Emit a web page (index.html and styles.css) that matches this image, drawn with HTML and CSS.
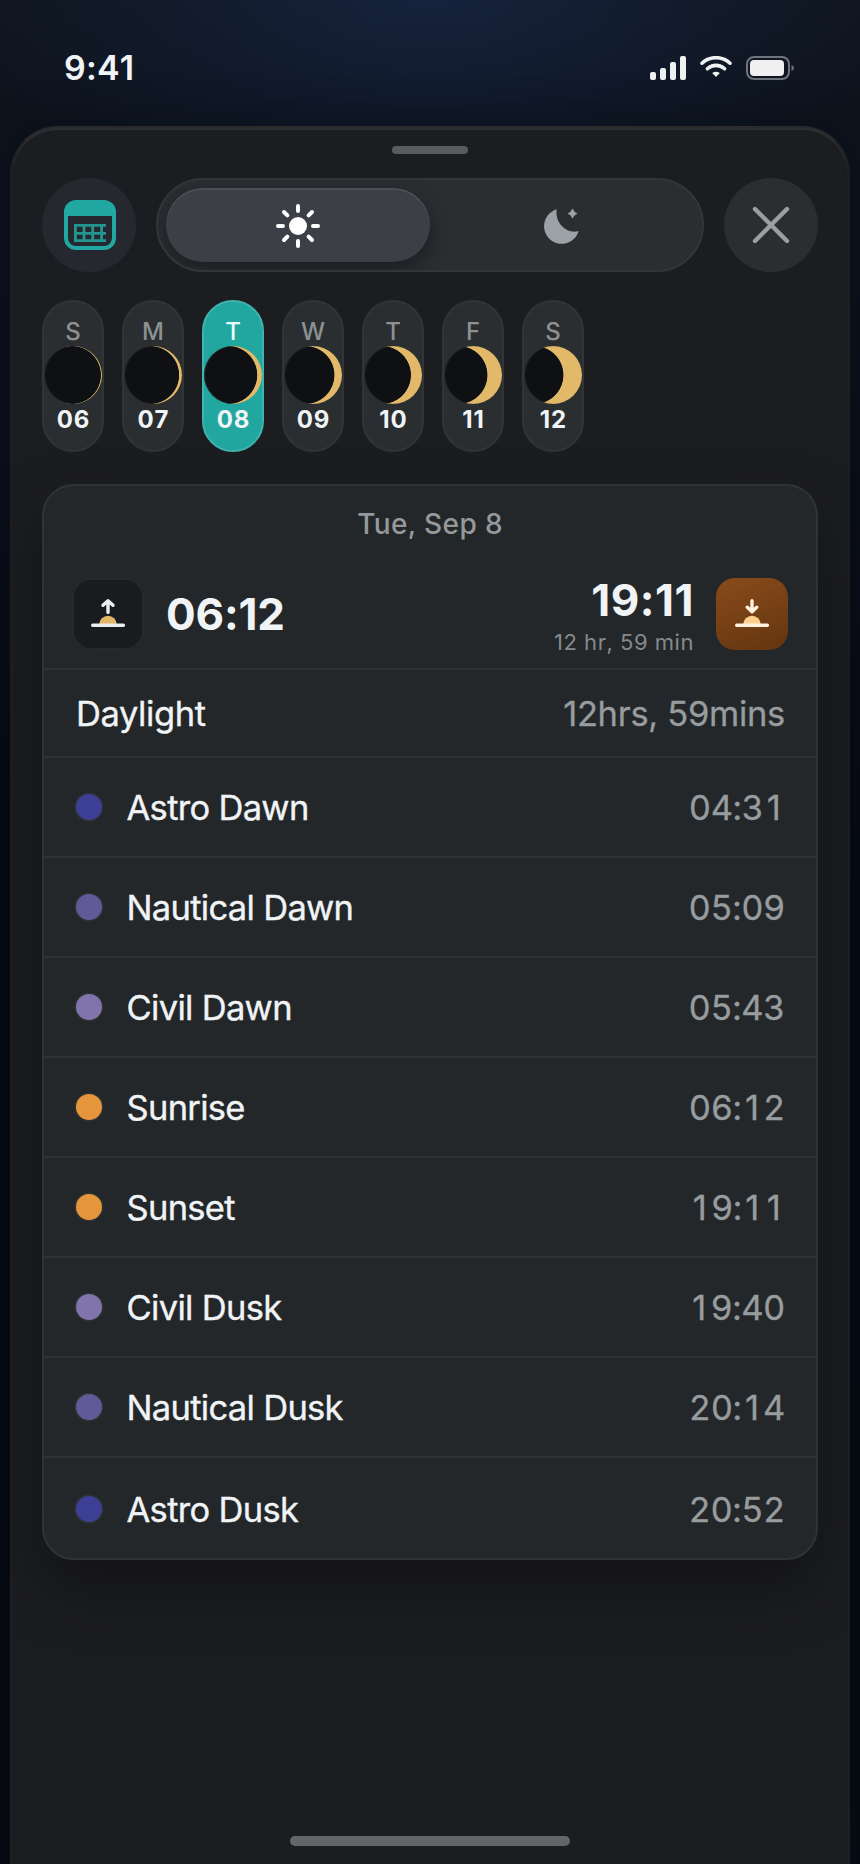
FILE: index.html
```html
<!DOCTYPE html>
<html lang="en">
<head>
<meta charset="utf-8">
<title>Sun times</title>
<link rel="stylesheet" href="styles.css">
</head>
<body>
<div class="screen">
  <header class="status">
    <span class="clock">9:41</span>
    <span class="status-icons">
      <svg width="36" height="24" viewBox="0 0 36 24" fill="#eef0f2"><rect y="16" width="6" height="8" rx="2"/><rect x="10" y="12" width="6" height="12" rx="2"/><rect x="20" y="6" width="6" height="18" rx="2"/><rect x="30" width="6" height="24" rx="2"/></svg>
      <svg class="wifi" width="32" height="24" viewBox="0 0 32 24" fill="none" stroke="#eef0f2" stroke-width="3.6" stroke-linecap="round"><path d="M2 7.2a20.5 20.5 0 0 1 28 0"/><path d="M7.4 12.8a12.6 12.6 0 0 1 17.2 0"/><path d="M12.2 17q3.8-2.6 7.6 0L16 21z" fill="#eef0f2" stroke="none"/></svg>
      <svg width="50" height="24" viewBox="0 0 50 24"><rect x="1" y="1" width="42" height="22" rx="7" fill="none" stroke="#fff" stroke-opacity=".4" stroke-width="2"/><rect x="4" y="4" width="34" height="16" rx="4" fill="#f0f0f1"/><path d="M45.5 9q2.5 1 2.5 3t-2.5 3z" fill="#fff" fill-opacity=".4"/></svg>
    </span>
  </header>

  <main class="sheet">
    <div class="grabber"></div>

    <div class="controls">
      <button class="round calendar" aria-label="Calendar">
        <svg width="52" height="50" viewBox="0 0 52 50"><path fill="#21a8a2" fill-rule="evenodd" d="M12 0h28a12 12 0 0 1 12 12v26a12 12 0 0 1-12 12H12A12 12 0 0 1 0 38V12A12 12 0 0 1 12 0zM4 16v22a8 8 0 0 0 8 8h28a8 8 0 0 0 8-8V16z"/><path fill="none" stroke="#22968f" stroke-width="2.8" d="M11.4 24v18M20 24v18M28.7 24v18M37.6 24v18M10 25.4h32M10 33.4h32M10 40.7h32"/></svg>
      </button>
      <div class="segment">
        <div class="option active">
          <svg width="48" height="48" viewBox="0 0 48 48" fill="#fff" stroke="#fff" stroke-width="4" stroke-linecap="round"><circle cx="24" cy="25" r="9" stroke="none"/><path d="M24 5v5M24 40v5M4 25h5M39 25h5M10 11l3.4 3.4M34.6 35.6L38 39M10 39l3.4-3.4M34.6 14.4L38 11"/></svg>
        </div>
        <div class="option">
          <svg width="48" height="48" viewBox="0 0 48 48" fill="#9ba1a5"><path d="M18.7 8.3A17.6 17.6 0 1 0 40.6 30C30 33.4 16.5 23 18.7 8.300z"/><path d="M34.500 7.500q1.400 3.600 5 5q-3.600 1.400-5 5q-1.400-3.600-5-5q3.600-1.400 5-5z"/></svg>
        </div>
      </div>
      <button class="round" aria-label="Close">
        <svg width="40" height="40" viewBox="0 0 40 40" stroke="#9b9fa2" stroke-width="4.400" stroke-linecap="round"><path d="M4 4l32 32M36 4L4 36"/></svg>
      </button>
    </div>

    <div class="week">
      <div class="day"><span class="dow">S</span><i class="moon p1"></i><span class="num">06</span></div>
      <div class="day"><span class="dow">M</span><i class="moon p2"></i><span class="num">07</span></div>
      <div class="day selected"><span class="dow">T</span><i class="moon p3"></i><span class="num">08</span></div>
      <div class="day"><span class="dow">W</span><i class="moon p4"></i><span class="num">09</span></div>
      <div class="day"><span class="dow">T</span><i class="moon p5"></i><span class="num">10</span></div>
      <div class="day"><span class="dow">F</span><i class="moon p6"></i><span class="num">11</span></div>
      <div class="day"><span class="dow">S</span><i class="moon p7"></i><span class="num">12</span></div>
    </div>

    <section class="card">
      <div class="summary">
        <div class="date">Tue, Sep 8</div>
        <div class="sun-row">
          <div class="tile rise">
            <svg width="36" height="36" viewBox="0 0 36 36" fill="none" stroke="#eceded" stroke-width="3.400" stroke-linecap="round" stroke-linejoin="round"><path d="M9.300 28.500a8.700 8.700 0 0 1 17.400 0z" fill="#e5b567" stroke="none"/><path d="M2.700 29.300h30.700M18 5v11.400M13 9.300l5-4.600 5 4.600"/></svg>
          </div>
          <div class="time">06:12</div>
          <div class="set-time">
            <div class="time">19:11</div>
            <div class="length">12 hr, 59 min</div>
          </div>
          <div class="tile set">
            <svg width="36" height="36" viewBox="0 0 36 36" fill="none" stroke="#fff1df" stroke-width="3.400" stroke-linecap="round" stroke-linejoin="round"><path d="M9.300 28.500a8.700 8.700 0 0 1 17.400 0z" fill="#ffd08c" stroke="none"/><path d="M2.700 29.300h30.700M18 4.700v10.500M13.300 11.300l4.700 4.500 4.700-4.500"/></svg>
          </div>
        </div>
      </div>
      <div class="row daylight"><span class="name">Daylight</span><span class="value">12hrs, 59mins</span></div>
      <div class="row"><i class="dot astro"></i><span class="name">Astro Dawn</span><span class="value clocked">04:3<b>1</b></span></div>
      <div class="row"><i class="dot nautical"></i><span class="name">Nautical Dawn</span><span class="value clocked">05:09</span></div>
      <div class="row"><i class="dot civil"></i><span class="name">Civil Dawn</span><span class="value clocked">05:43</span></div>
      <div class="row"><i class="dot sun"></i><span class="name">Sunrise</span><span class="value clocked">06:<b>1</b>2</span></div>
      <div class="row"><i class="dot sun"></i><span class="name">Sunset</span><span class="value clocked"><b>1</b>9:<b>1</b><b>1</b></span></div>
      <div class="row"><i class="dot civil"></i><span class="name">Civil Dusk</span><span class="value clocked"><b>1</b>9:40</span></div>
      <div class="row"><i class="dot nautical"></i><span class="name">Nautical Dusk</span><span class="value clocked">20:<b>1</b>4</span></div>
      <div class="row last"><i class="dot astro"></i><span class="name">Astro Dusk</span><span class="value clocked">20:52</span></div>
    </section>

    <div class="home"></div>
  </main>
</div>
</body>
</html>
```
FILE: styles.css
```css
* { box-sizing: border-box; }

body {
  margin: 0;
  background: #070b14;
  font-family: Inter, sans-serif;
  color: #f1f4f6;
}

.screen {
  width: 860px;
  height: 1864px;
  display: flex;
  flex-direction: column;
  overflow: hidden;
  background:
    radial-gradient(ellipse 480px 230px at 50% -10px, rgba(26, 42, 78, .65), rgba(20, 36, 64, .35) 55%, transparent),
    linear-gradient(#10161f, #0d131d 120px, #0b101c 400px, #070b14 900px, #070b13);
}

.status {
  flex: none;
  height: 126px;
  padding: 48px 64px 0;
  display: flex;
  align-items: flex-start;
  justify-content: space-between;
}
.clock {
  font-size: 34px;
  font-weight: 600;
  line-height: 40px;
  letter-spacing: .005em;
  font-kerning: none;
}
.status-icons { display: flex; gap: 14px; padding-top: 8px; }

.sheet {
  flex: 1;
  margin: 0 10px;
  padding: 18px 30px;
  display: flex;
  flex-direction: column;
  border: 2px solid rgba(255, 255, 255, .01);
  border-top-color: rgba(255, 255, 255, .06);
  border-bottom: 0;
  border-radius: 48px 48px 0 0;
  background: #1c1d20;
  box-shadow: inset 0 2px 0 rgba(255, 255, 255, .08), 0 -10px 40px rgba(0, 0, 0, .2);
}
.grabber {
  flex: none;
  align-self: center;
  width: 76px;
  height: 8px;
  border-radius: 4px;
  background: #5a5b5d;
}

.controls { display: flex; gap: 20px; margin-top: 24px; }
.round {
  width: 94px;
  height: 94px;
  padding: 0;
  border: 0;
  border-radius: 50%;
  background: #2a2e31;
  display: flex;
  align-items: center;
  justify-content: center;
}
.calendar { padding-left: 2px; background: #25282e; }
.segment {
  flex: 1;
  height: 94px;
  padding: 8px;
  display: flex;
  border: 2px solid #323639;
  border-radius: 47px;
  background: #2a2e31;
  overflow: hidden;
}
.option {
  flex: 1;
  display: flex;
  align-items: center;
  justify-content: center;
  border-radius: 37px;
}
.option.active {
  background: #3c3f46;
  box-shadow: inset 0 2px 0 rgba(255, 255, 255, .08), 0 8px 20px rgba(0, 0, 0, .35);
}

.week { display: flex; gap: 18px; margin-top: 28px; }
.day {
  width: 62px;
  height: 152px;
  padding-top: 15px;
  display: flex;
  flex-direction: column;
  align-items: center;
  border: 2px solid #313537;
  border-radius: 31px;
  background: #2a2e30;
}
.day.selected { background: #21a6a0; border-color: #3fb3ad; }
.dow { font-size: 24px; font-weight: 500; line-height: 29px; color: #8d9194; }
.selected .dow { color: #eafaf8; }
.num { font-size: 24px; font-weight: 700; line-height: 31px; letter-spacing: .04em; padding-left: 1px; font-kerning: none; }
.moon {
  width: 58px;
  height: 58px;
  border-radius: 50%;
  background: radial-gradient(circle at calc(50% - var(--lit)) 50%, #0f1013 28.500px, #e2b968 29.300px);
  box-shadow: inset 1px 0 1px rgba(60, 64, 66, .6);
}
.p1 { --lit: 1px; }
.p2 { --lit: 2.800px; }
.p3 { --lit: 4.700px; }
.p4 { --lit: 7.500px; }
.p5 { --lit: 11px; }
.p6 { --lit: 14.500px; }
.p7 { --lit: 18.500px; }

.card {
  margin-top: 32px;
  border: 2px solid #303336;
  border-radius: 32px;
  background: #232729;
  box-shadow: 0 28px 64px rgba(0, 0, 0, .36);
  overflow: hidden;
}
.summary { height: 184px; padding: 20px 28px 0; border-bottom: 2px solid #303336; }
.date {
  text-align: center;
  font-size: 28px;
  font-weight: 500;
  line-height: 36px;
  letter-spacing: .013em;
  color: #95999b;
}
.sun-row { display: flex; align-items: flex-start; gap: 22px; margin-top: 36px; }
.tile {
  width: 72px;
  height: 72px;
  border-radius: 19px;
  display: flex;
  align-items: center;
  justify-content: center;
}
.rise { background: #1a1b1f; border: 2px solid #26292c; }
.set { background: linear-gradient(160deg, #8a4b1a, #633510); }
.time {
  font-size: 44px;
  font-weight: 700;
  line-height: 72px;
  letter-spacing: -.004em;
  font-kerning: none;
}
.set-time { margin-left: auto; text-align: right; }
.set-time .time { line-height: 44px; letter-spacing: .012em; }
.length {
  margin: 6px 0 0;
  font-size: 22px;
  line-height: 28px;
  letter-spacing: .024em;
  font-kerning: none;
  color: #868a8c;
}

.row {
  height: 100px;
  padding: 0 31px 0 32px;
  display: flex;
  align-items: center;
  border-bottom: 2px solid #303336;
  font-size: 34.500px;
}
.row.daylight { height: 88px; }
.row.last { padding-top: 2px; border-bottom: 0; }
.name { letter-spacing: -.02em; -webkit-text-stroke: .35px #f1f4f6; }
.daylight .name { letter-spacing: -.012em; }
.value { margin-left: auto; color: #979c9f; letter-spacing: -.009em; -webkit-text-stroke: .3px #979c9f; }
.clocked { letter-spacing: -.013em; font-variant-numeric: tabular-nums; }
.clocked b {
  display: inline-block;
  width: 21.700px;
  padding-right: 1px;
  text-align: center;
  font-weight: 400;
  font-variant-numeric: normal;
}
.dot {
  width: 26px;
  height: 26px;
  margin-right: 24.500px;
  border-radius: 50%;
  box-shadow: 0 0 0 1.500px rgba(255, 255, 255, .05);
}
.astro { background: #3d3f94; }
.nautical { background: #605a98; }
.civil { background: #8173ab; }
.sun { background: #e5963c; }

.home {
  align-self: center;
  width: 280px;
  height: 10px;
  margin-top: auto;
  border-radius: 5px;
  background: #646567;
}
```
